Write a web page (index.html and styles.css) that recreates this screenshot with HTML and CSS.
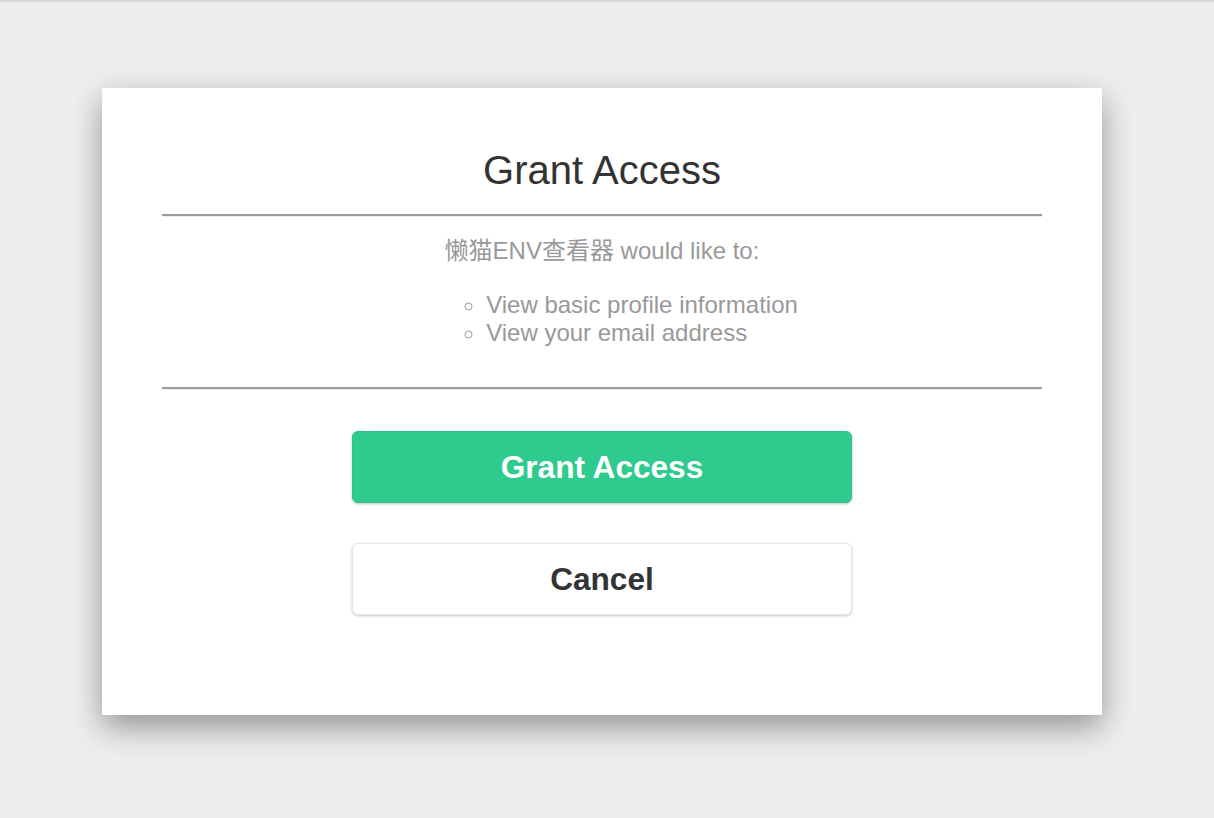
FILE: index.html
```html
<!DOCTYPE html>
<html lang="en">
<head>
<meta charset="utf-8">
<title>Grant Access</title>
<link rel="stylesheet" href="styles.css">
</head>
<body>
<div class="page">
  <div class="card">
    <h1 class="title">Grant Access</h1>
    <hr class="rule">
    <p class="lead">懒猫ENV查看器 would like to:</p>
    <div class="scopes-wrap">
      <ul class="scopes">
        <li>View basic profile information</li>
        <li>View your email address</li>
      </ul>
    </div>
    <hr class="rule rule-bottom">
    <div class="actions">
      <button class="btn btn-primary" type="button">Grant Access</button>
      <button class="btn btn-secondary" type="button">Cancel</button>
    </div>
  </div>
</div>
</body>
</html>
```

FILE: styles.css
```css
html {
  background: #eeeeee;
}
body {
  margin: 0;
  min-height: 100vh;
  background: linear-gradient(#d2d2d2, #e6e6e6 2px, #eeeeee 5px, #eeeeee);
  font-family: "Liberation Sans", Arial, "Noto Sans CJK SC", sans-serif;
}
.page {
  padding-top: 88px;
  padding-left: 102px;
}
.card {
  width: 1000px;
  box-sizing: border-box;
  background: #ffffff;
  padding: 60px 60px 100px;
  box-shadow: 0 12px 30px rgba(0, 0, 0, 0.38);
  text-align: center;
}
.title {
  margin: 0;
  font-size: 40px;
  line-height: 45px;
  font-weight: normal;
  color: #333333;
}
.rule {
  margin: 21px 0 0;
  height: 0;
  border: 0;
  border-top: 2px solid #9a9a9a;
  border-bottom: 1px solid #ececec;
}
.lead {
  margin: 20px 0 0;
  font-size: 24px;
  line-height: 28px;
  color: #999999;
}
.scopes-wrap {
  margin-top: 26px;
}
.scopes {
  display: inline-block;
  margin: 0 0 0 40px;
  padding: 0 0 0 40px;
  text-align: left;
  list-style: circle;
  font-size: 24px;
  line-height: 28px;
  color: #999999;
}
.rule-bottom {
  margin-top: 40px;
}
.actions {
  display: flex;
  flex-direction: column;
  align-items: center;
  gap: 40px;
  margin-top: 41px;
}
.btn {
  width: 500px;
  height: 72px;
  border-radius: 6px;
  font-family: "Liberation Sans", Arial, sans-serif;
  font-size: 31.6px;
  font-weight: bold;
  cursor: pointer;
}
.btn-primary {
  background: #2eca8e;
  color: #ffffff;
  border: 1px solid #2dc48a;
  box-shadow: 0 1px 3px rgba(0, 0, 0, 0.25);
}
.btn-secondary {
  background: #ffffff;
  color: #333333;
  border: 1px solid #e6e6e6;
  box-shadow: 0 1px 3px rgba(0, 0, 0, 0.22);
}
```
